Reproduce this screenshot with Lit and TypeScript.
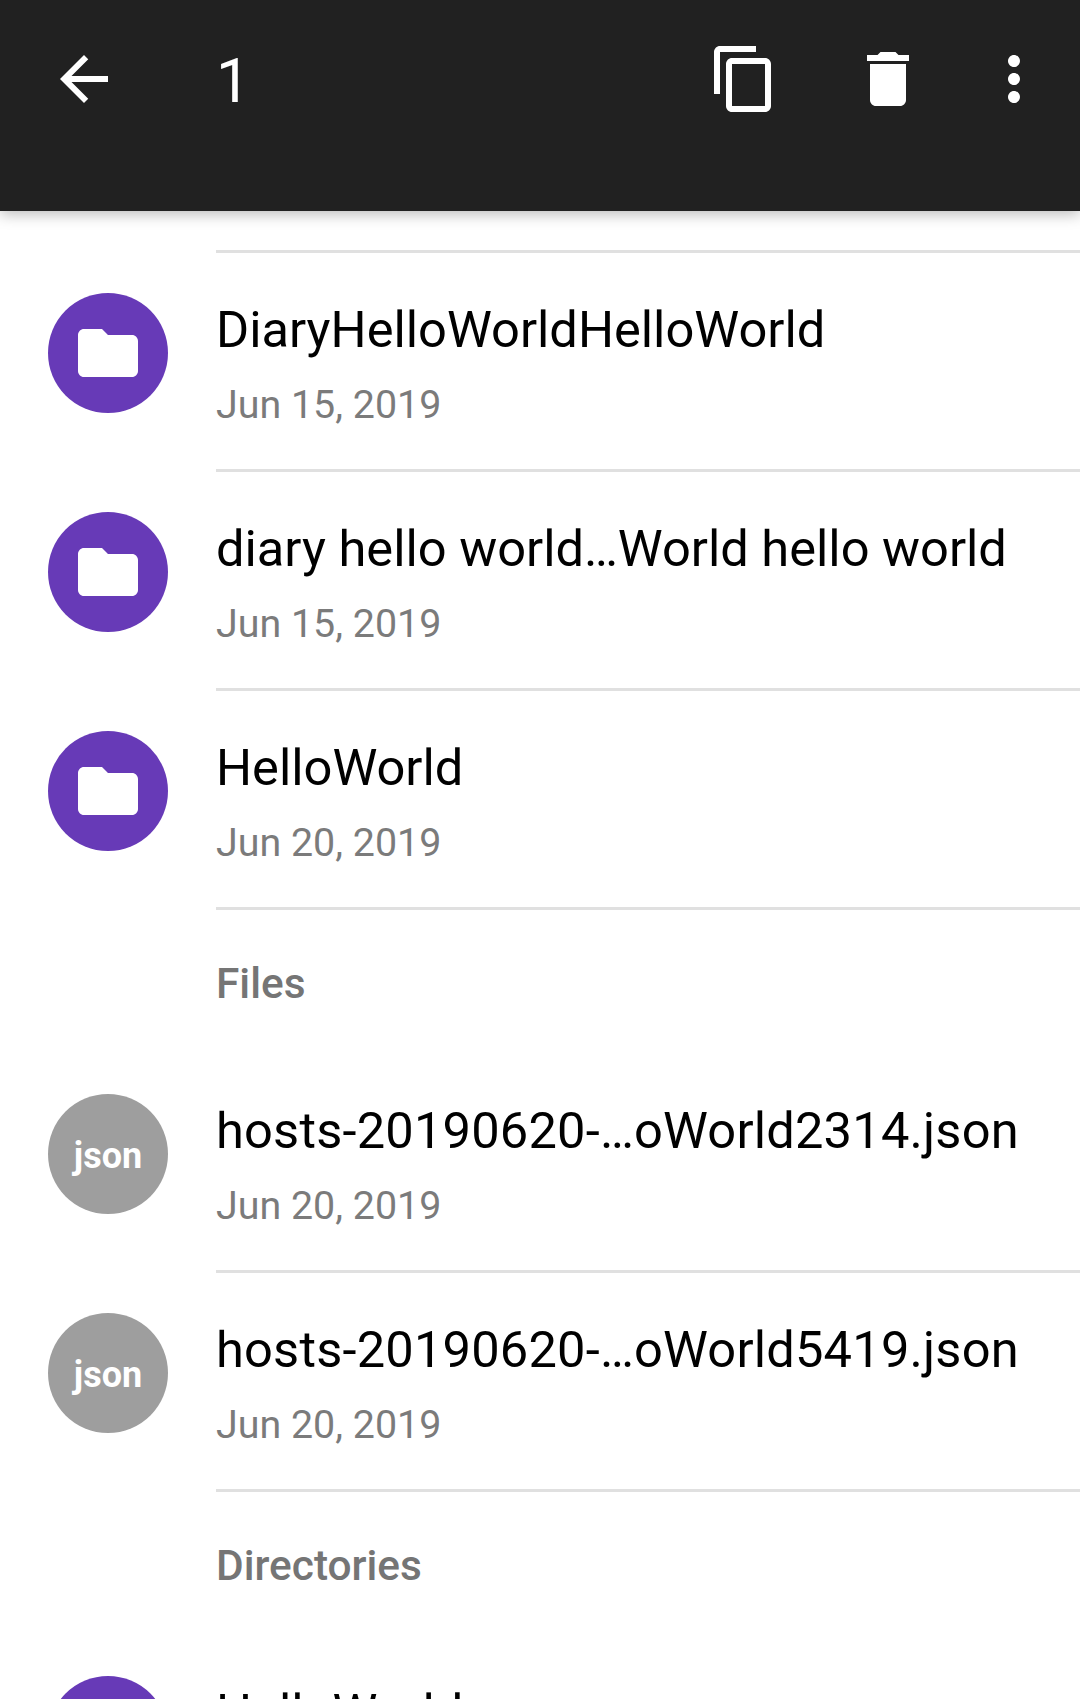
import { LitElement, html, css, svg } from "lit";
import { customElement } from "lit/decorators.js";

type Row = { kind: "folder" | "json"; name: string; date?: string };
type Item = Row | { section: string };

const ITEMS: Item[] = [
  { kind: "folder", name: "DiaryHelloWorldHelloWorld", date: "Jun 15, 2019" },
  { kind: "folder", name: "diary hello world…World hello world", date: "Jun 15, 2019" },
  { kind: "folder", name: "HelloWorld", date: "Jun 20, 2019" },
  { section: "Files" },
  { kind: "json", name: "hosts-20190620-…oWorld2314.json", date: "Jun 20, 2019" },
  { kind: "json", name: "hosts-20190620-…oWorld5419.json", date: "Jun 20, 2019" },
  { section: "Directories" },
  { kind: "folder", name: "HelloWorld", date: "Jun 20, 2019" },
];

const ARROW_BACK = "M20 11H7.83l5.59-5.59L12 4l-8 8 8 8 1.41-1.41L7.83 13H20v-2z";
const COPY =
  "M16 1H4c-1.1 0-2 .9-2 2v14h2V3h12V1zm3 4H8c-1.1 0-2 .9-2 2v14c0 1.1.9 2 2 2h11c1.1 0 2-.9 2-2V7c0-1.1-.9-2-2-2zm0 16H8V7h11v14z";
const DELETE = "M6 19c0 1.1.9 2 2 2h8c1.1 0 2-.9 2-2V7H6v12zM19 4h-3.5l-1-1h-5l-1 1H5v2h14V4z";
const MORE =
  "M12 8c1.1 0 2-.9 2-2s-.9-2-2-2-2 .9-2 2 .9 2 2 2zm0 2c-1.1 0-2 .9-2 2s.9 2 2 2 2-.9 2-2-.9-2-2-2zm0 6c-1.1 0-2 .9-2 2s.9 2 2 2 2-.9 2-2-.9-2-2-2z";
const FOLDER = "M10 4H4c-1.1 0-2 .9-2 2v12c0 1.1.9 2 2 2h16c1.1 0 2-.9 2-2V8c0-1.1-.9-2-2-2h-8l-2-2z";

const icon = (d: string) => html`<svg class="icon" viewBox="0 0 24 24">${svg`<path d=${d}></path>`}</svg>`;

@customElement("app-root")
export class AppRoot extends LitElement {
  private renderRow(row: Row) {
    return html`
      <div class="row ${row.kind}">
        <div class="avatar">
          ${row.kind === "folder" ? icon(FOLDER) : html`<span class="ext">json</span>`}
        </div>
        <div class="body">
          <div class="name">${row.name}</div>
          ${row.date ? html`<div class="date">${row.date}</div>` : ""}
        </div>
      </div>
    `;
  }

  protected render() {
    return html`
      <div class="bar">
        <span class="back">${icon(ARROW_BACK)}</span>
        <span class="title">1</span>
        <span class="actions">
          ${icon(COPY)}${icon(DELETE)}<span class="more">${icon(MORE)}</span>
        </span>
      </div>
      <div class="list">
        <div class="rule"></div>
        ${ITEMS.map((item) =>
          "section" in item ? html`<div class="section">${item.section}</div>` : this.renderRow(item),
        )}
      </div>
    `;
  }

  static styles = css`
    :host {
      display: block;
      height: 1699px;
      overflow: hidden;
      background: #fff;
      font-family: Roboto, sans-serif;
    }

    .bar {
      display: flex;
      height: 211px;
      box-sizing: border-box;
      padding: 43px 30px 0 48px;
      background: #212121;
      box-shadow: 0 3px 14px rgba(0, 0, 0, 0.28);
      color: #fff;
    }

    .icon {
      display: block;
      width: 72px;
      height: 72px;
      fill: currentColor;
    }

    .back {
      width: 168px;
    }

    .title {
      padding-top: 2px;
      font-size: 61px;
      line-height: 72px;
    }

    .actions {
      display: flex;
      gap: 72px;
      margin-left: auto;
    }

    .more {
      margin-left: -18px;
    }

    .list {
      padding-top: 39px;
    }

    .rule {
      height: 3px;
      margin-left: 216px;
      background: #e0e0e0;
    }

    .row {
      display: flex;
      height: 219px;
      padding-left: 48px;
    }

    .avatar {
      display: flex;
      flex: none;
      align-items: center;
      justify-content: center;
      width: 120px;
      height: 120px;
      margin-top: 40px;
      border-radius: 50%;
      color: #fff;
    }

    .folder .avatar {
      background: #673ab7;
    }

    .json .avatar {
      background: #9e9e9e;
      font-size: 36px;
      font-weight: 700;
    }

    .ext {
      padding-top: 4px;
    }

    .body {
      flex: 1;
      box-sizing: border-box;
      margin-left: 48px;
      padding-top: 45px;
      border-bottom: 3px solid #e0e0e0;
    }

    .name {
      font-size: 50.6px;
      line-height: 64px;
      color: #000;
      white-space: nowrap;
    }

    /* digits run a little wider in the reference */
    .json .name {
      letter-spacing: 0.2px;
    }

    .date {
      margin-top: 18px;
      font-size: 39.4px;
      line-height: 50px;
      color: #7b7b7b;
    }

    .section {
      display: flex;
      align-items: center;
      height: 144px;
      box-sizing: border-box;
      padding: 2px 0 0 216px;
      font-size: 42.4px;
      font-weight: 500;
      color: #757575;
    }
  `;
}
